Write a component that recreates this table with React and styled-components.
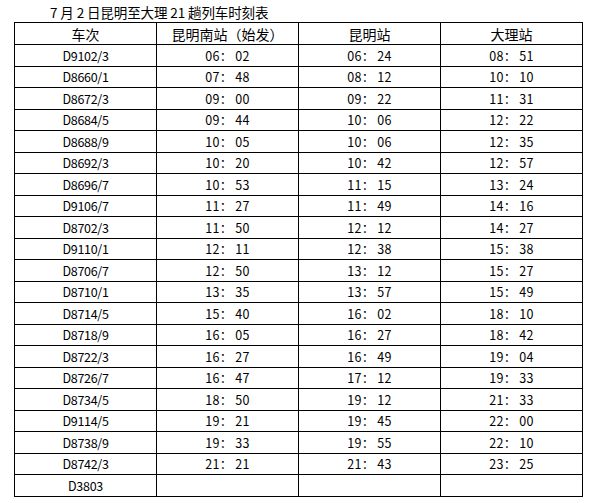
import styled, { createGlobalStyle } from "styled-components";

const GlobalStyle = createGlobalStyle`
  body {
    margin: 0;
    background: #fff;
    font-family: "Noto Sans CJK SC", sans-serif;
    color: #000;
  }
`;

const Page = styled.div`
  padding: 0 0 0 14px;
  width: 583px;
`;

const Title = styled.div`
  height: 22px;
  line-height: 24px;
  padding-left: 36px;
  font-size: 13.5px;
  letter-spacing: -0.1px;
  white-space: nowrap;
`;

const Table = styled.table`
  border-collapse: collapse;
  table-layout: fixed;
  width: 568px;
`;

const HeadCell = styled.th`
  border: 1px solid #000;
  height: 21px;
  padding: 0;
  font-weight: normal;
  font-size: 14px;
  line-height: 20px;
  text-align: center;
`;

const Cell = styled.td`
  border: 1px solid #000;
  height: ${({ $tall }) => ($tall ? 21 : 20)}px;
  padding: 0;
  font-size: 12.5px;
  line-height: 18px;
  text-align: center;
  letter-spacing: ${({ $code }) => ($code ? "-0.3px" : "0.2px")};
`;

const rows = [
  ["D9102/3", "06:02", "06:24", "08:51"],
  ["D8660/1", "07:48", "08:12", "10:10"],
  ["D8672/3", "09:00", "09:22", "11:31"],
  ["D8684/5", "09:44", "10:06", "12:22"],
  ["D8688/9", "10:05", "10:06", "12:35"],
  ["D8692/3", "10:20", "10:42", "12:57"],
  ["D8696/7", "10:53", "11:15", "13:24"],
  ["D9106/7", "11:27", "11:49", "14:16"],
  ["D8702/3", "11:50", "12:12", "14:27"],
  ["D9110/1", "12:11", "12:38", "15:38"],
  ["D8706/7", "12:50", "13:12", "15:27"],
  ["D8710/1", "13:35", "13:57", "15:49"],
  ["D8714/5", "15:40", "16:02", "18:10"],
  ["D8718/9", "16:05", "16:27", "18:42"],
  ["D8722/3", "16:27", "16:49", "19:04"],
  ["D8726/7", "16:47", "17:12", "19:33"],
  ["D8734/5", "18:50", "19:12", "21:33"],
  ["D9114/5", "19:21", "19:45", "22:00"],
  ["D8738/9", "19:33", "19:55", "22:10"],
  ["D8742/3", "21:21", "21:43", "23:25"],
  ["D3803", "", "", ""],
];

const fmt = (t) => (t ? t.replace(":", "： ") : "");

export default function App() {
  return (
    <>
      <GlobalStyle />
      <Page>
        <Title>7 月 2 日昆明至大理 21 趟列车时刻表</Title>
        <Table>
          <colgroup>
            <col style={{ width: 142 }} />
            <col style={{ width: 142 }} />
            <col style={{ width: 142 }} />
            <col style={{ width: 142 }} />
          </colgroup>
          <thead>
            <tr>
              <HeadCell>车次</HeadCell>
              <HeadCell>昆明南站（始发）</HeadCell>
              <HeadCell>昆明站</HeadCell>
              <HeadCell>大理站</HeadCell>
            </tr>
          </thead>
          <tbody>
            {rows.map((r, i) => (
              <tr key={r[0]}>
                <Cell $code $tall={i % 2 === 0}>{r[0]}</Cell>
                <Cell $tall={i % 2 === 0}>{fmt(r[1])}</Cell>
                <Cell $tall={i % 2 === 0}>{fmt(r[2])}</Cell>
                <Cell $tall={i % 2 === 0}>{fmt(r[3])}</Cell>
              </tr>
            ))}
          </tbody>
        </Table>
      </Page>
    </>
  );
}
